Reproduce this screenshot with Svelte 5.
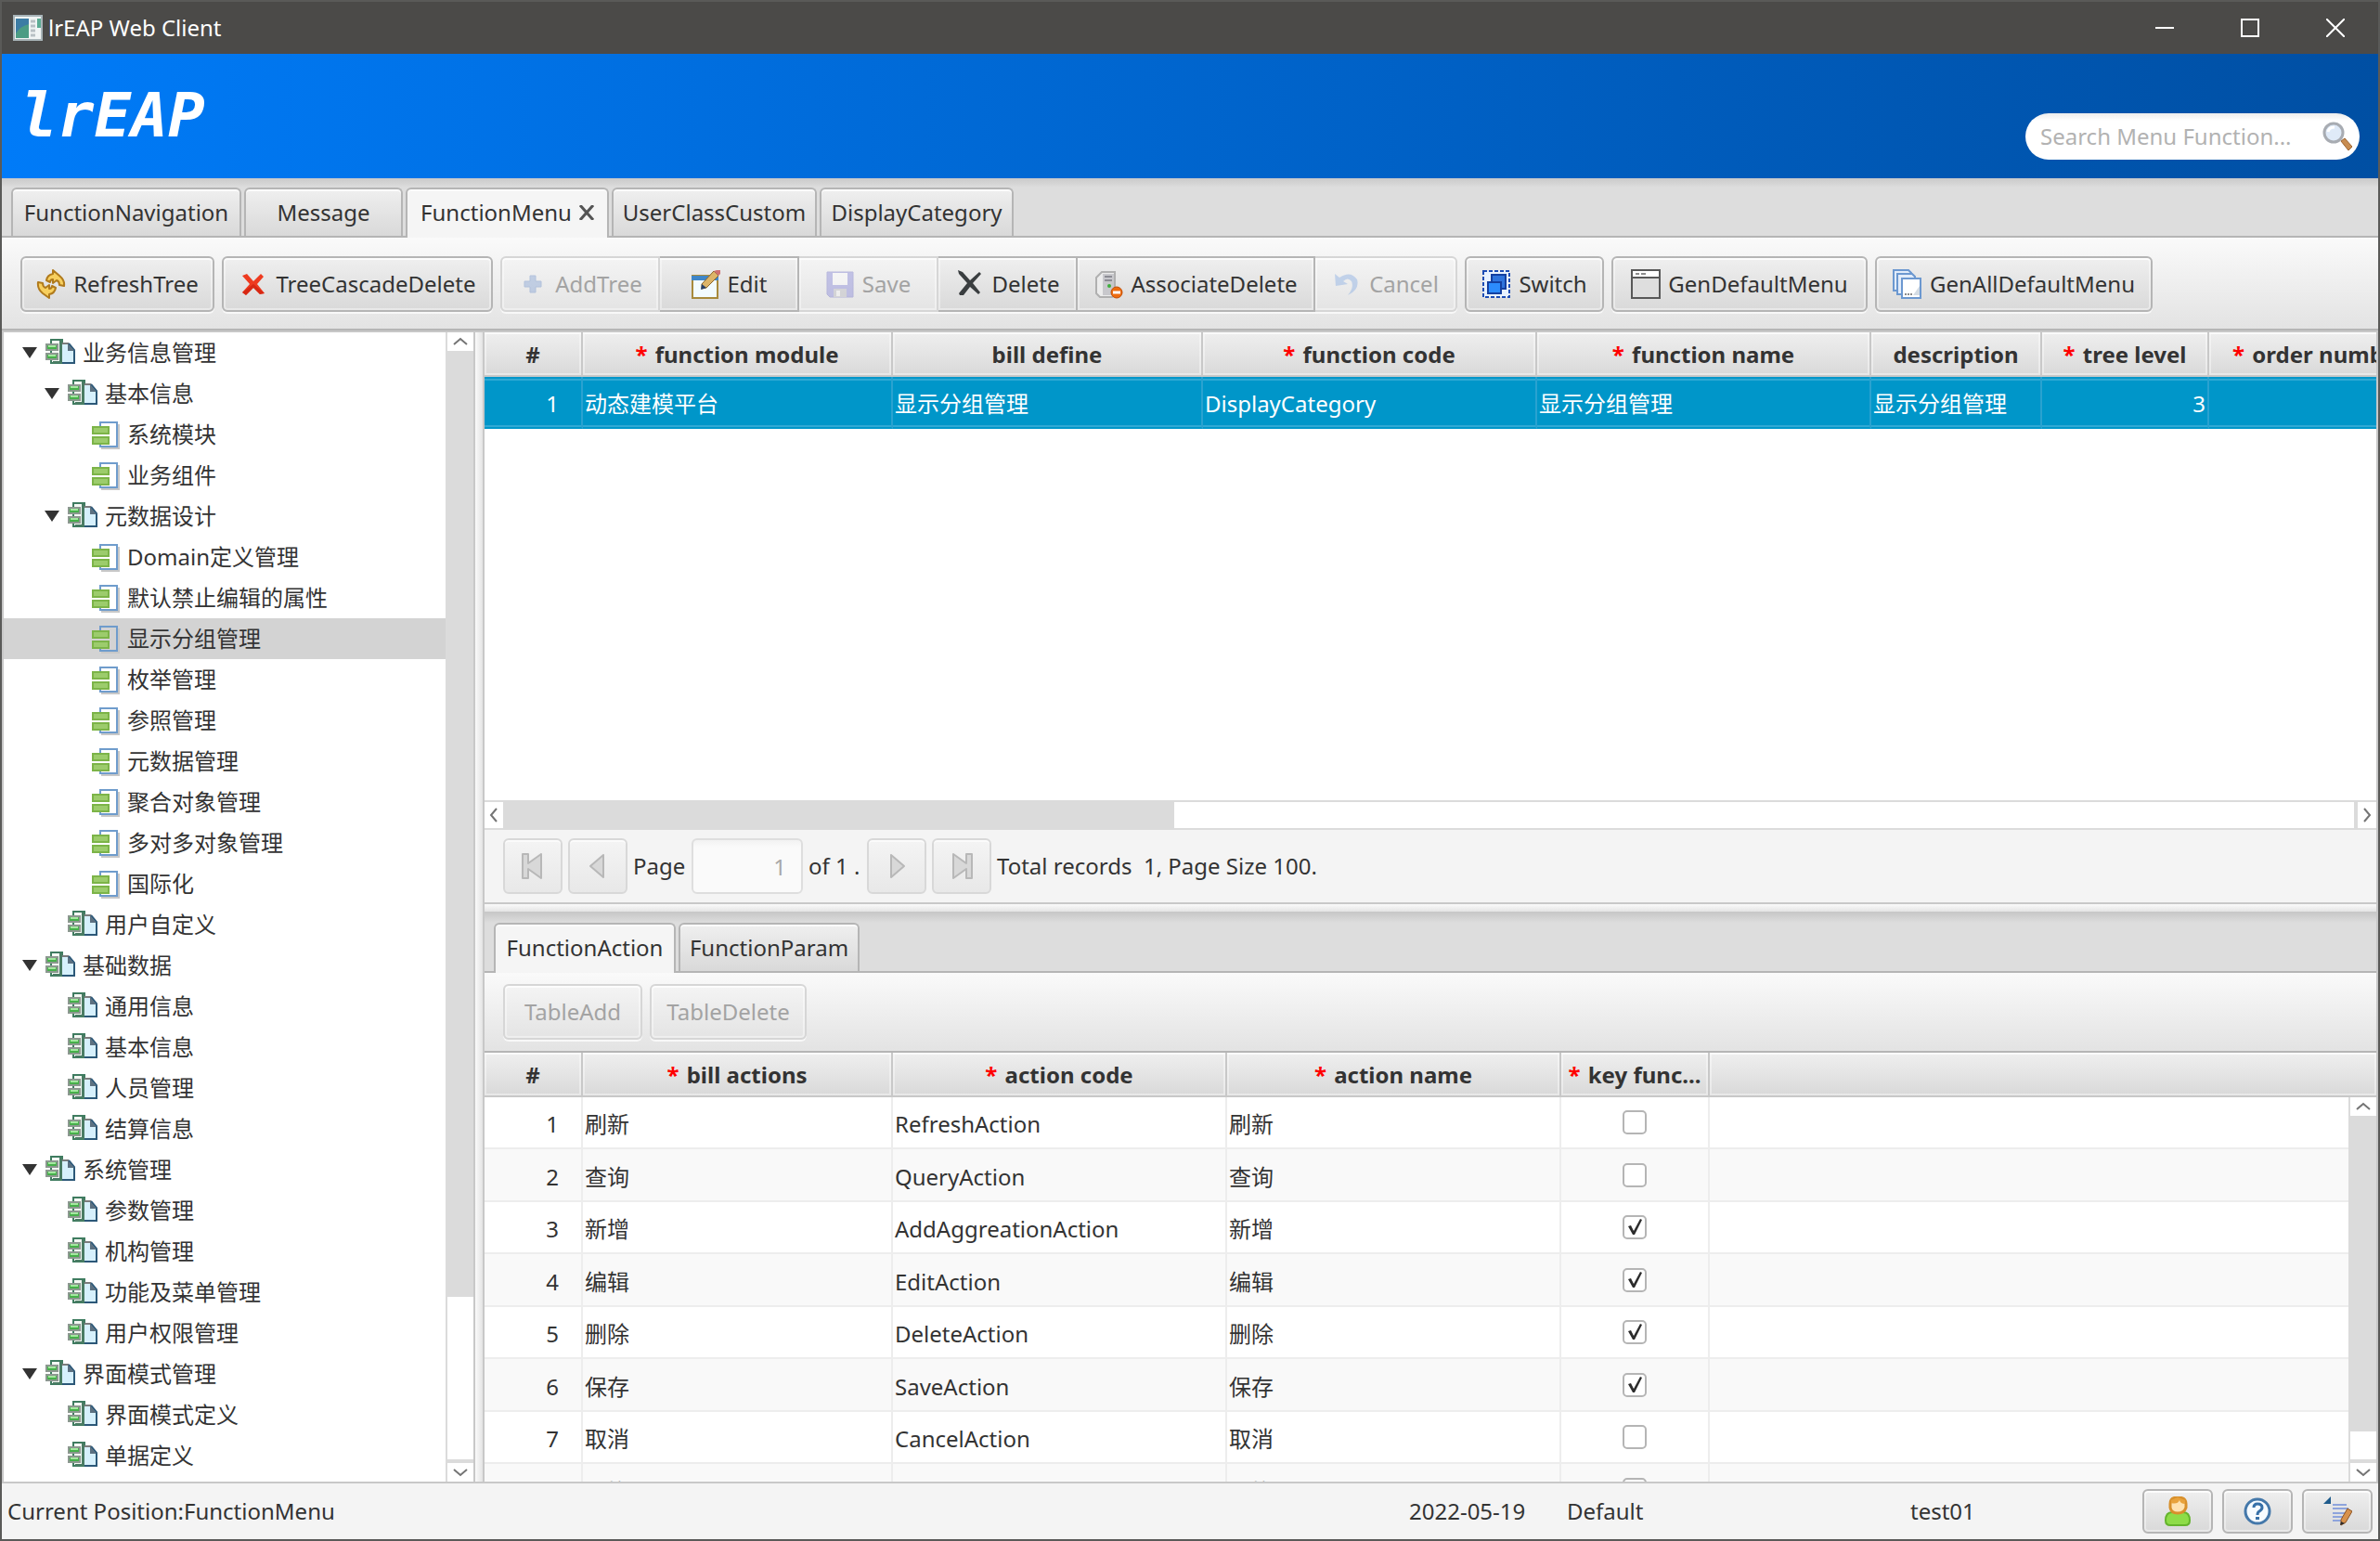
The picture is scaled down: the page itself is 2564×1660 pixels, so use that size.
<script lang="ts">
    type TreeNode = {
        label: string;
        level: number;
        kind: "group" | "leaf";
        open?: boolean;
    };

    type ToolButton = {
        label: string;
        icon: string;
        width: number;
        disabled?: boolean;
    };

    const tabs = [
        { label: "FunctionNavigation", width: 248 },
        { label: "Message", width: 171 },
        { label: "FunctionMenu", width: 219, closable: true },
        { label: "UserClassCustom", width: 221 },
        { label: "DisplayCategory", width: 209 },
    ];

    const detailTabs = [
        { label: "FunctionAction", width: 196 },
        { label: "FunctionParam", width: 195 },
    ];

    // each inner array is one segmented group
    const toolGroups: ToolButton[][] = [
        [{ label: "RefreshTree", icon: "refresh", width: 209 }],
        [{ label: "TreeCascadeDelete", icon: "cross", width: 292 }],
        [
            { label: "AddTree", icon: "plus", width: 172, disabled: true },
            { label: "Edit", icon: "edit", width: 150 },
            { label: "Save", icon: "save", width: 150, disabled: true },
            { label: "Delete", icon: "delete", width: 150 },
            { label: "AssociateDelete", icon: "server", width: 256 },
            { label: "Cancel", icon: "undo", width: 153, disabled: true },
        ],
        [{ label: "Switch", icon: "switch", width: 150 }],
        [{ label: "GenDefaultMenu", icon: "window", width: 276 }],
        [{ label: "GenAllDefaultMenu", icon: "pages", width: 299 }],
    ];

    const tree: TreeNode[] = [
        { label: "业务信息管理", level: 0, kind: "group", open: true },
        { label: "基本信息", level: 1, kind: "group", open: true },
        { label: "系统模块", level: 2, kind: "leaf" },
        { label: "业务组件", level: 2, kind: "leaf" },
        { label: "元数据设计", level: 1, kind: "group", open: true },
        { label: "Domain定义管理", level: 2, kind: "leaf" },
        { label: "默认禁止编辑的属性", level: 2, kind: "leaf" },
        { label: "显示分组管理", level: 2, kind: "leaf" },
        { label: "枚举管理", level: 2, kind: "leaf" },
        { label: "参照管理", level: 2, kind: "leaf" },
        { label: "元数据管理", level: 2, kind: "leaf" },
        { label: "聚合对象管理", level: 2, kind: "leaf" },
        { label: "多对多对象管理", level: 2, kind: "leaf" },
        { label: "国际化", level: 2, kind: "leaf" },
        { label: "用户自定义", level: 1, kind: "group" },
        { label: "基础数据", level: 0, kind: "group", open: true },
        { label: "通用信息", level: 1, kind: "group" },
        { label: "基本信息", level: 1, kind: "group" },
        { label: "人员管理", level: 1, kind: "group" },
        { label: "结算信息", level: 1, kind: "group" },
        { label: "系统管理", level: 0, kind: "group", open: true },
        { label: "参数管理", level: 1, kind: "group" },
        { label: "机构管理", level: 1, kind: "group" },
        { label: "功能及菜单管理", level: 1, kind: "group" },
        { label: "用户权限管理", level: 1, kind: "group" },
        { label: "界面模式管理", level: 0, kind: "group", open: true },
        { label: "界面模式定义", level: 1, kind: "group" },
        { label: "单据定义", level: 1, kind: "group" },
    ];

    const menuColumns = [
        { label: "#", width: 106 },
        { label: "function module", width: 334, required: true },
        { label: "bill define", width: 334 },
        { label: "function code", width: 360, required: true },
        { label: "function name", width: 360, required: true },
        { label: "description", width: 184 },
        { label: "tree level", width: 180, required: true },
        { label: "order number", width: 240, required: true },
    ];

    const actionColumns = [
        { label: "#", width: 106 },
        { label: "bill actions", width: 334, required: true },
        { label: "action code", width: 360, required: true },
        { label: "action name", width: 360, required: true },
        { label: "key func...", width: 160, required: true },
    ];

    let actions = $state([
        { name: "刷新", code: "RefreshAction", key: false },
        { name: "查询", code: "QueryAction", key: false },
        { name: "新增", code: "AddAggreationAction", key: true },
        { name: "编辑", code: "EditAction", key: true },
        { name: "删除", code: "DeleteAction", key: true },
        { name: "保存", code: "SaveAction", key: true },
        { name: "取消", code: "CancelAction", key: false },
        { name: "切换", code: "SwitchAction", key: false },
    ]);

    let activeTab = $state(2);
    let activeDetail = $state(0);
    let selectedNode = $state(7);
    let keyword = $state("");
</script>

{#snippet icon(name: string)}
    <svg class="icon" viewBox="0 0 32 32" aria-hidden="true">
        {#if name === "refresh"}
            <g fill="#f7cf5e" stroke="#b07a1c" stroke-width="2" stroke-linejoin="round">
                <path d="M11 12 Q12 6 18 5 V1 L25 7 Q31 12 30 18 L25 17 Q25 13 22 12 L18 15 V11 Q15 11 15 14 Z" />
                <path d="M21 20 Q20 26 14 27 V31 L7 26 Q1 21 2 14 L7 15 Q7 19 10 20 L14 17 V21 Q17 21 17 18 Z" />
            </g>
        {:else if name === "cross"}
            <path d="M4 7 L9 5 L16 13 L24 5 L27 8 L20 16 L28 26 L23 27 L16 20 L8 28 L4 25 L12 16 Z" fill="#ee3a1f" />
            <path d="M16 16 L28 26 L23 27 L16 20 L8 28 L4 25 Z" fill="#c81c0c" opacity="0.6" />
        {:else if name === "plus"}
            <path d="M13 7 H19 V13 H25 V19 H19 V25 H13 V19 H7 V13 H13 Z" fill="#7f9fd4" stroke="#5f84c4" />
        {:else if name === "edit"}
            <rect x="2" y="7" width="27" height="24" fill="#f2fbff" stroke="#a88a3c" stroke-width="2" />
            <path d="M1 7 H30 V12 H1 Z" fill="#3f86c8" />
            <path d="M12 16 L25 2 L30 7 L17 20 L12 21 Z" fill="#dcb468" stroke="#8c6428" stroke-width="1" />
            <path d="M25 2 L28 1 H32 V5 L30 7 Z" fill="#cf7070" />
            <path d="M12 16 L17 20 L11 22 Z" fill="#26406a" />
        {:else if name === "save"}
            <path d="M2 3 H30 V30 H5 L2 27 Z" fill="#7f7fd8" stroke="#6a6ac4" />
            <rect x="8" y="4" width="16" height="13" fill="#fff" />
            <rect x="9" y="21" width="14" height="9" fill="#b4b4bc" />
            <rect x="12" y="23" width="4" height="6" fill="#f4f4f4" />
        {:else if name === "delete"}
            <path d="M3 1 L8 3 L16 12 L26 3 L28 5 L19 15 L27 25 L25 27 L16 19 L9 28 H5 L4 26 L13 15 L4 5 Z" fill="#3a3e40" />
        {:else if name === "server"}
            <path d="M3 9 L9 3 H23 V27 L20 30 H7 L3 26 Z" fill="#ececec" stroke="#b0b0b0" stroke-width="2" />
            <path d="M10 5 H22 V28 H10 Z" fill="#c8c8cc" />
            <path d="M12 8 H20 M12 12 H20" stroke="#8c8c94" stroke-width="2" />
            <circle cx="17" cy="18" r="2" fill="#3cae3c" />
            <circle cx="25" cy="25" r="6" fill="#ee6c10" stroke="#c04c04" />
            <path d="M21 25 H29" stroke="#fff" stroke-width="3" />
        {:else if name === "undo"}
            <path d="M3 5 L4 18 L17 16 L12 13 Q17 8 21 13 Q24 20 17 28 Q30 22 27 11 Q20 1 8 9 Z" fill="#7fa8e4" />
        {:else if name === "switch"}
            <rect x="2" y="2" width="28" height="28" fill="#e8f2ff" stroke="#1c4cb4" stroke-width="2" stroke-dasharray="4 2" />
            <rect x="11" y="6" width="15" height="15" fill="#2f74dc" stroke="#1440a0" stroke-width="2" />
            <rect x="7" y="14" width="14" height="12" fill="#2c8cfc" stroke="#1440a0" stroke-width="2" />
        {:else if name === "window"}
            <rect x="1" y="1" width="30" height="30" fill="#dedede" stroke="#585858" stroke-width="2" />
            <rect x="2" y="2" width="28" height="6" fill="#fff" />
            <path d="M5 5 H9 M11 5 H16" stroke="#8c8c8c" stroke-width="2" />
            <path d="M1 9 H31" stroke="#585858" stroke-width="2" />
        {:else if name === "pages"}
            <g fill="#e2ecfa" stroke="#6c98d0" stroke-width="2">
                <path d="M1 1 H17 L20 4 V23 H1 Z" />
                <path d="M5 5 H21 L24 8 V27 H5 Z" />
                <path d="M10 10 H30 V31 H10 Z" fill="#fff" />
            </g>
            <path d="M13 27 H22" stroke="#8c8c8c" stroke-width="2" stroke-dasharray="2 1" />
            <path d="M22 28 L29 18 V28 Z" fill="#d4dce4" />
        {:else if name === "user"}
            <path d="M3 26 Q3 17 10 17 H22 Q29 17 29 26 Q29 31 24 31 H8 Q3 31 3 26 Z" fill="#8edc48" stroke="#64b42c" stroke-width="2" />
            <path d="M8 8 Q8 1 16 1 Q25 1 25 8 V12 Q23 18 16 18 Q9 18 8 12 Z" fill="#ffe2b0" stroke="#d8902c" stroke-width="3" />
            <path d="M9 7 Q16 9 18 4 Q19 8 24 8 V4 L16 1 L9 4 Z" fill="#e8a23c" />
        {:else if name === "help"}
            <circle cx="16" cy="16" r="13" fill="#f6fbff" stroke="#4478aa" stroke-width="3" />
            <path d="M12 12 Q12 8 16 8 Q21 8 21 12 Q21 14 18 16 Q16 17 16 20" fill="none" stroke="#3670a8" stroke-width="3" />
            <rect x="14" y="22" width="4" height="3" fill="#3670a8" />
        {:else if name === "note"}
            <path d="M1 8 L9 0 V8 Z" fill="#1f5c8c" />
            <path d="M11 9 H26 M11 13 H28 M11 18 H25 M11 22 H22 M11 26 H20" stroke="#8ea4dc" stroke-width="2" />
            <path d="M20 25 L27 13 L32 16 L25 28 L20 31 Z" fill="#d8924c" stroke="#8c5424" />
            <path d="M20 27 L24 29 L19 31 Z" fill="#2c2c2c" />
        {:else if name === "search"}
            <path d="M20 21 L24 18 L32 27 L28 31 Z" fill="#c88c50" stroke="#9c6430" />
            <circle cx="12" cy="12" r="10" fill="#dfeaf8" stroke="#a8acb2" stroke-width="3" />
            <path d="M6 11 Q7 6 13 6" fill="none" stroke="#fff" stroke-width="3" />
        {:else if name === "group"}
            <path d="M6 2 H18 V27 H6 Z" fill="#f4f8f4" stroke="#3f7c60" stroke-width="2" />
            <path d="M15 3 H18 V27 H8 V25 H15 Z" fill="#4a7c64" />
            <rect x="1" y="7" width="12" height="6" fill="#46b04a" stroke="#8c9890" stroke-width="2" />
            <rect x="1" y="17" width="12" height="6" fill="#46b04a" stroke="#8c9890" stroke-width="2" />
            <path d="M3 9 H11 M3 19 H11" stroke="#a4e8a0" stroke-width="2" />
            <path d="M18 6 H25 L31 13 V27 H18 Z" fill="#d6f0fc" />
            <path d="M18 6 H25" stroke="#7c7c7c" stroke-width="2" />
            <path d="M25 6 L31 13 V27 H18" fill="none" stroke="#2c5878" stroke-width="2" />
            <path d="M24 6 V14 H31 Z" fill="#5c7080" />
        {:else if name === "leaf"}
            <path d="M12 31 H31 V5" fill="none" stroke="#c8c8c8" stroke-width="2" />
            <path d="M11 7 V3 H29 V29 H11 V26" fill="none" stroke="#6f9ccc" stroke-width="2" />
            <rect x="3" y="8" width="17" height="7" fill="#9ccc6c" stroke="#7cb448" stroke-width="2" />
            <rect x="3" y="19" width="17" height="7" fill="#9ccc6c" stroke="#7cb448" stroke-width="2" />
        {:else if name === "app"}
            <rect x="1" y="3" width="30" height="26" fill="#f0f4f4" stroke="#a8b4b8" stroke-width="2" />
            <rect x="3" y="6" width="14" height="21" fill="#4c9c84" />
            <path d="M3 6 H17 V12 Q8 14 3 22 Z" fill="#3c7ca4" />
            <path d="M19 9 H24 M19 14 H24 M19 19 H24 M19 24 H24" stroke="#b8c0c4" stroke-width="3" />
            <rect x="26" y="6" width="4" height="10" fill="#5cac94" />
        {/if}
    </svg>
{/snippet}

{#snippet chevron(path: string)}
    <svg class="chevron" viewBox="0 0 16 16" aria-hidden="true">
        <path d={path} fill="none" stroke="#747474" stroke-width="2" />
    </svg>
{/snippet}

{#snippet pageIcon(path: string)}
    <svg class="page-icon" viewBox="0 0 28 28" aria-hidden="true">
        <path d={path} fill="#d8d8d8" stroke="#b8b8b8" stroke-width="2" stroke-linejoin="round" />
    </svg>
{/snippet}

{#snippet columnHead(col: { label: string; required?: boolean })}
    <th>
        {#if col.required}<span class="required">*</span>{/if}
        {col.label}
    </th>
{/snippet}

<div class="window">
    <header class="title-bar">
        <span class="app-title">{@render icon("app")}lrEAP Web Client</span>
        <div class="window-controls">
            <button aria-label="Minimize">
                <svg viewBox="0 0 20 20"><path d="M0 10 H20" /></svg>
            </button>
            <button aria-label="Maximize">
                <svg viewBox="0 0 20 20"><path d="M1 1 H19 V19 H1 Z" /></svg>
            </button>
            <button aria-label="Close">
                <svg viewBox="0 0 20 20"><path d="M0 0 L20 20 M20 0 L0 20" /></svg>
            </button>
        </div>
    </header>

    <div class="banner">
        <h1>lrEAP</h1>
        <label class="search">
            <input
                type="text"
                placeholder="Search Menu Function..."
                aria-label="Search menu function"
                bind:value={keyword}
            />
            {@render icon("search")}
        </label>
    </div>

    <nav class="tab-bar">
        {#each tabs as tab, i}
            <button
                class="tab"
                class:active={i === activeTab}
                style="width: {tab.width}px"
                onclick={() => (activeTab = i)}
            >
                {tab.label}
                {#if tab.closable}
                    <svg class="tab-close" viewBox="0 0 16 16" aria-hidden="true">
                        <path d="M1 0 L15 16 M15 0 L1 16" />
                    </svg>
                {/if}
            </button>
        {/each}
    </nav>

    <div class="toolbar">
        {#each toolGroups as group}
            <div class="tool-group">
                {#each group as tool}
                    <button
                        class="tool"
                        disabled={tool.disabled}
                        style="width: {tool.width}px"
                    >
                        {@render icon(tool.icon)}{tool.label}
                    </button>
                {/each}
            </div>
        {/each}
    </div>

    <main class="workspace">
        <aside class="tree-pane">
            <ul class="tree">
                {#each tree as node, i}
                    <li class:selected={i === selectedNode}>
                        <button
                            class="node level-{node.level}"
                            onclick={() => (selectedNode = i)}
                        >
                            <span class="arrow" class:open={node.open}></span>
                            {@render icon(node.kind)}
                            <span>{node.label}</span>
                        </button>
                    </li>
                {/each}
            </ul>
            <div class="scroll-v tree-scroll">
                <span class="scroll-end">{@render chevron("M1 11 L8 5 L15 11")}</span>
                <span class="thumb"></span>
                <span class="track"></span>
                <span class="scroll-end bottom">{@render chevron("M1 5 L8 11 L15 5")}</span>
            </div>
        </aside>

        <div class="splitter-v"></div>

        <div class="content">
            <section class="pane menu-pane">
                <div class="menu-grid">
                    <table class="wide">
                        <colgroup>
                            {#each menuColumns as col}
                                <col style="width: {col.width}px" />
                            {/each}
                        </colgroup>
                        <thead>
                            <tr>
                                {#each menuColumns as col}
                                    {@render columnHead(col)}
                                {/each}
                            </tr>
                        </thead>
                        <tbody>
                            <tr class="selected-row">
                                <td class="index">1</td>
                                <td>动态建模平台</td>
                                <td>显示分组管理</td>
                                <td>DisplayCategory</td>
                                <td>显示分组管理</td>
                                <td>显示分组管理</td>
                                <td class="number">3</td>
                                <td></td>
                            </tr>
                        </tbody>
                    </table>
                </div>
                <div class="scroll-h">
                    <span class="scroll-end">{@render chevron("M11 1 L5 8 L11 15")}</span>
                    <span class="thumb"></span>
                    <span class="track"></span>
                    <span class="scroll-end right">{@render chevron("M5 1 L11 8 L5 15")}</span>
                </div>
                <div class="pager">
                    <button disabled aria-label="First page">
                        {@render pageIcon("M3 1 H9 V11 L23 1 V27 L9 17 V27 H3 Z")}
                    </button>
                    <button disabled aria-label="Previous page">
                        {@render pageIcon("M20 2 V26 L6 14 Z")}
                    </button>
                    <label for="page-no">Page</label>
                    <input id="page-no" type="text" value="1" disabled />
                    <span class="page-count">of 1 .</span>
                    <button disabled aria-label="Next page">
                        {@render pageIcon("M8 2 V26 L22 14 Z")}
                    </button>
                    <button disabled aria-label="Last page">
                        {@render pageIcon("M5 1 L19 11 V1 H25 V27 H19 V17 L5 27 Z")}
                    </button>
                    <span class="total">Total records&nbsp; 1, Page Size 100.</span>
                </div>
            </section>

            <div class="splitter-h"></div>

            <section class="pane action-pane">
                <nav class="tab-bar">
                    {#each detailTabs as tab, i}
                        <button
                            class="tab"
                            class:active={i === activeDetail}
                            style="width: {tab.width}px"
                            onclick={() => (activeDetail = i)}
                        >
                            {tab.label}
                        </button>
                    {/each}
                </nav>
                <div class="detail-toolbar">
                    <button class="tool" disabled style="width: 150px">TableAdd</button>
                    <button class="tool" disabled style="width: 169px">TableDelete</button>
                </div>
                <div class="action-grid">
                    <table>
                        <colgroup>
                            {#each actionColumns as col}
                                <col style="width: {col.width}px" />
                            {/each}
                            <col />
                        </colgroup>
                        <thead>
                            <tr>
                                {#each actionColumns as col}
                                    {@render columnHead(col)}
                                {/each}
                                <th class="filler"></th>
                            </tr>
                        </thead>
                        <tbody>
                            {#each actions as action, i}
                                <tr>
                                    <td class="index">{i + 1}</td>
                                    <td>{action.name}</td>
                                    <td>{action.code}</td>
                                    <td>{action.name}</td>
                                    <td class="check">
                                        <input
                                            type="checkbox"
                                            aria-label="key function {action.code}"
                                            bind:checked={action.key}
                                        />
                                        {#if action.key}
                                            <svg viewBox="0 0 26 26" aria-hidden="true">
                                                <path d="M6 12 L9 11 L12 17 L19 4 L21 5 L13 21 H11 Z" />
                                            </svg>
                                        {/if}
                                    </td>
                                    <td class="filler"></td>
                                </tr>
                            {/each}
                        </tbody>
                    </table>
                    <div class="scroll-v grid-scroll">
                        <span class="scroll-end">{@render chevron("M1 11 L8 5 L15 11")}</span>
                        <span class="thumb"></span>
                        <span class="track"></span>
                        <span class="scroll-end bottom">{@render chevron("M1 5 L8 11 L15 5")}</span>
                    </div>
                </div>
            </section>
        </div>
    </main>

    <footer class="status-bar">
        <span class="position">Current Position:FunctionMenu</span>
        <span class="date">2022-05-19</span>
        <span class="group-name">Default</span>
        <span class="user-name">test01</span>
        <div class="status-buttons">
            <button aria-label="User">{@render icon("user")}</button>
            <button aria-label="Help">{@render icon("help")}</button>
            <button aria-label="Notes">{@render icon("note")}</button>
        </div>
    </footer>
</div>

<style>
    :global(body) {
        margin: 0;
    }

    * {
        box-sizing: border-box;
    }

    .window {
        display: flex;
        flex-direction: column;
        height: 100vh;
        border: 2px solid #5a5a58;
        background: #f4f4f4;
        color: #333333;
        font-family: "Noto Sans", "Noto Sans CJK SC", sans-serif;
        font-size: 24px;
        line-height: 32px;
        overflow: hidden;
    }

    button,
    input {
        margin: 0;
        padding: 0;
        font: inherit;
        color: inherit;
    }

    svg {
        display: block;
        flex: none;
    }

    .icon {
        width: 32px;
        height: 32px;
    }

    /* title bar */
    .title-bar {
        display: flex;
        justify-content: space-between;
        align-items: center;
        flex: none;
        height: 56px;
        padding-left: 12px;
        background: #4b4a48;
        color: #ffffff;
    }

    .app-title {
        display: flex;
        align-items: center;
        gap: 6px;
    }

    .window-controls {
        display: flex;
        height: 100%;
    }

    .window-controls button {
        display: flex;
        align-items: center;
        justify-content: center;
        width: 92px;
        border: none;
        background: none;
    }

    .window-controls svg {
        width: 20px;
        height: 20px;
        fill: none;
        stroke: #ffffff;
        stroke-width: 2;
    }

    /* banner */
    .banner {
        display: flex;
        justify-content: space-between;
        align-items: center;
        flex: none;
        height: 134px;
        padding: 0 20px;
        background: linear-gradient(to right, #007bf8, #004fa3);
    }

    h1 {
        margin: 0;
        color: #ffffff;
        font-family: "DejaVu Sans Mono", monospace;
        font-size: 66px;
        font-style: italic;
        font-weight: bold;
        line-height: 76px;
    }

    .search {
        display: flex;
        align-items: center;
        align-self: flex-end;
        width: 360px;
        height: 50px;
        margin-bottom: 20px;
        padding: 0 8px 0 16px;
        border-radius: 25px;
        background: linear-gradient(#ececec, #ffffff 8px);
    }

    .search input {
        flex: 1;
        min-width: 0;
        border: none;
        outline: none;
        background: none;
    }

    .search input::placeholder {
        color: #b2b2b2;
        opacity: 1;
    }

    /* tabs */
    .tab-bar {
        display: flex;
        align-items: flex-end;
        gap: 3px;
        flex: none;
        height: 64px;
        padding: 0 10px;
        border-bottom: 2px solid #b5b5b5;
        background: linear-gradient(#cacaca, #dddddd 10px);
    }

    .tab {
        display: flex;
        align-items: center;
        justify-content: center;
        gap: 8px;
        height: 52px;
        border: 2px solid #b5b5b5;
        border-bottom: none;
        border-radius: 6px 6px 0 0;
        background: linear-gradient(#efefef, #d9d9d9);
        box-shadow: inset 0 2px 0 #fbfbfb;
        white-space: nowrap;
    }

    .tab.active {
        height: 54px;
        margin-bottom: -2px;
        padding-bottom: 2px;
        background: #f5f5f5;
    }

    .tab-close {
        width: 16px;
        height: 16px;
        fill: none;
        stroke: #555555;
        stroke-width: 3;
    }

    /* toolbars */
    .toolbar {
        display: flex;
        align-items: flex-start;
        gap: 8px;
        flex: none;
        height: 100px;
        padding: 20px 20px 0;
        border-bottom: 2px solid #b5b5b5;
        background: linear-gradient(#fafafa, #e3e3e3);
    }

    .tool-group {
        display: flex;
    }

    .tool {
        display: flex;
        align-items: center;
        justify-content: center;
        gap: 8px;
        height: 60px;
        border: 2px solid #b5b5b5;
        border-radius: 6px;
        background: linear-gradient(#efefef, #d9d9d9);
        box-shadow:
            inset 0 2px 0 #fcfcfc,
            inset 0 0 0 2px rgba(255, 255, 255, 0.4),
            0 2px 0 rgba(255, 255, 255, 0.7);
        white-space: nowrap;
    }

    .tool:disabled {
        border-color: #d6d6d6;
        background: linear-gradient(#f4f4f4, #e4e4e4);
        color: #a3a3a3;
    }

    .tool:disabled .icon {
        opacity: 0.4;
    }

    .tool-group .tool:not(:first-child) {
        border-left: none;
        border-top-left-radius: 0;
        border-bottom-left-radius: 0;
    }

    .tool-group .tool:not(:last-child) {
        border-top-right-radius: 0;
        border-bottom-right-radius: 0;
    }

    .detail-toolbar {
        display: flex;
        align-items: center;
        gap: 8px;
        flex: none;
        height: 86px;
        padding: 0 20px;
        border-bottom: 2px solid #b5b5b5;
        background: linear-gradient(#fafafa, #e3e3e3);
    }

    /* workspace */
    .workspace {
        display: flex;
        flex: 1;
        min-height: 0;
        border: 2px solid #c8c8c8;
    }

    .tree-pane {
        display: flex;
        flex: none;
        width: 506px;
        background: #ffffff;
    }

    .tree {
        flex: 1;
        margin: 0;
        padding: 0;
        overflow: hidden;
        list-style: none;
    }

    .tree li {
        height: 44px;
    }

    .tree li.selected {
        background: #d3d3d3;
    }

    .node {
        display: flex;
        align-items: center;
        gap: 8px;
        width: 100%;
        height: 100%;
        padding-left: 19px;
        border: none;
        background: none;
        text-align: left;
    }

    .level-1 {
        padding-left: 43px;
    }

    .level-2 {
        padding-left: 67px;
    }

    .arrow {
        width: 18px;
        height: 12px;
    }

    .arrow.open {
        background: #333333;
        clip-path: polygon(1px 0, 17px 0, 9px 12px);
    }

    .splitter-v {
        flex: none;
        width: 12px;
        border: solid #c8c8c8;
        border-width: 0 2px;
        background: linear-gradient(to right, #fafafa, #e4e4e4);
    }

    .splitter-h {
        flex: none;
        height: 12px;
        border: solid #c8c8c8;
        border-width: 2px 0;
        background: linear-gradient(#fafafa, #e4e4e4);
    }

    .content {
        display: flex;
        flex: 1;
        flex-direction: column;
        min-width: 0;
    }

    .pane {
        display: flex;
        flex-direction: column;
        min-height: 0;
    }

    .menu-pane {
        flex: 307;
    }

    .action-pane {
        flex: 306;
    }

    /* scroll bars */
    .scroll-v {
        display: flex;
        flex-direction: column;
        flex: none;
        width: 30px;
        border-left: 2px solid #dbdbdb;
        background: #ffffff;
    }

    .scroll-h {
        display: flex;
        flex: none;
        height: 32px;
        border: solid #dbdbdb;
        border-width: 2px 0;
        background: #ffffff;
    }

    .scroll-end {
        display: flex;
        align-items: center;
        justify-content: center;
        flex: none;
        min-width: 20px;
        min-height: 20px;
    }

    .scroll-end.bottom {
        min-height: 24px;
        border-top: 4px solid #dbdbdb;
    }

    .scroll-end.right {
        min-width: 24px;
        border-left: 4px solid #dbdbdb;
    }

    .chevron {
        width: 16px;
        height: 16px;
    }

    .thumb {
        background: #dbdbdb;
    }

    .tree-scroll .thumb {
        flex: 64;
    }

    .tree-scroll .track {
        flex: 11;
    }

    .grid-scroll .thumb {
        flex: 92;
    }

    .grid-scroll .track {
        flex: 8;
    }

    .scroll-h .thumb {
        flex: 29;
    }

    .scroll-h .track {
        flex: 51;
    }

    /* tables */
    table {
        border-collapse: separate;
        border-spacing: 0;
        table-layout: fixed;
        width: 100%;
    }

    table.wide {
        width: max-content;
    }

    th {
        height: 48px;
        padding: 2px 0 0;
        border: solid #c8c8c8;
        border-width: 0 2px 2px 0;
        background: linear-gradient(#efefef, #d9d9d9);
        box-shadow:
            inset 0 2px 0 #fafafa,
            inset 0 0 0 2px rgba(255, 255, 255, 0.4);
        font-weight: bold;
        white-space: nowrap;
    }

    th.filler,
    td.filler {
        border-right: none;
    }

    .required {
        margin-right: 2px;
        color: #ff0000;
    }

    td {
        height: 56px;
        padding: 4px 4px 0 2px;
        border: solid #ededed;
        border-width: 0 2px 2px 0;
        white-space: nowrap;
    }

    td.index {
        padding-right: 24px;
        text-align: right;
    }

    td.number {
        padding-right: 2px;
        text-align: right;
    }

    tbody tr:nth-child(even) {
        background: #f9f9f9;
    }

    tbody tr:nth-child(even) td {
        height: 57px;
    }

    .selected-row td {
        border-color: #2aa2d0;
        border-bottom-color: #0096c9;
        background: #0096c9;
        box-shadow:
            inset 0 2px 0 #0096c9,
            inset 0 4px 0 #30a9d4,
            inset 0 -2px 0 #30a9d4;
        color: #ffffff;
    }

    .menu-grid {
        flex: 1;
        min-height: 0;
        background: #ffffff;
        overflow: hidden;
    }

    .action-grid {
        position: relative;
        flex: 1;
        min-height: 0;
        background: #ffffff;
        overflow: hidden;
    }

    /* lies over the rows, below the header */
    .grid-scroll {
        position: absolute;
        top: 48px;
        right: 0;
        bottom: 0;
    }

    td.check {
        position: relative;
        padding: 0;
    }

    .check input {
        display: block;
        width: 26px;
        height: 26px;
        margin: 0 auto;
        border: 2px solid #b5b5b5;
        border-radius: 5px;
        background: #ffffff;
        appearance: none;
    }

    .check svg {
        position: absolute;
        inset: 0;
        width: 26px;
        height: 26px;
        margin: auto;
        fill: #2c2c2c;
        pointer-events: none;
    }

    /* pager */
    .pager {
        display: flex;
        align-items: center;
        gap: 6px;
        flex: none;
        height: 78px;
        padding: 0 20px;
    }

    .pager button {
        display: flex;
        align-items: center;
        justify-content: center;
        width: 64px;
        height: 60px;
        border: 2px solid #d8d8d8;
        border-radius: 6px;
        background: linear-gradient(#f4f4f4, #e8e8e8);
        box-shadow: inset 0 2px 0 #fbfbfb;
    }

    .page-icon {
        width: 28px;
        height: 28px;
    }

    .pager input {
        width: 120px;
        height: 60px;
        padding: 0 16px;
        border: 2px solid #dedede;
        border-radius: 6px;
        background: linear-gradient(#f2f2f2, #fafafa 8px);
        color: #a8a8a8;
        text-align: right;
    }

    .pager label,
    .page-count {
        width: 57px;
        white-space: nowrap;
    }

    /* status bar */
    .status-bar {
        display: flex;
        align-items: center;
        flex: none;
        height: 60px;
        padding: 0 6px;
    }

    .position {
        flex: 1;
    }

    .date {
        width: 170px;
    }

    .group-name {
        width: 370px;
    }

    .user-name {
        width: 250px;
    }

    .status-buttons {
        display: flex;
        gap: 10px;
    }

    .status-buttons button {
        display: flex;
        align-items: center;
        justify-content: center;
        width: 76px;
        height: 48px;
        border: 2px solid #b5b5b5;
        border-radius: 6px;
        background: linear-gradient(#efefef, #d9d9d9);
        box-shadow:
            inset 0 2px 0 #fcfcfc,
            inset 0 0 0 2px rgba(255, 255, 255, 0.4);
    }
</style>
